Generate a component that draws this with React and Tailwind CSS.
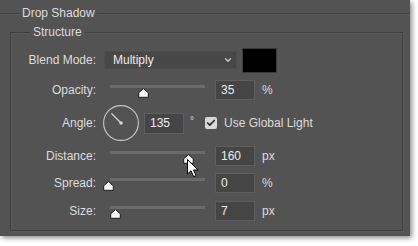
import { Check, ChevronDown } from "lucide-react";

const SLIDERS = {
  opacity: { label: "Opacity:", value: "35", unit: "%", row: "h-[20px]", thumb: "left-[28px]" },
  distance: { label: "Distance:", value: "160", unit: "px", row: "h-[20px]", thumb: "left-[73px]" },
  spread: { label: "Spread:", value: "0", unit: "%", row: "h-[34px]", thumb: "left-[-7px]" },
  size: { label: "Size:", value: "7", unit: "px", row: "h-[22px]", thumb: "left-[0px]" },
};

function Thumb({ className }) {
  return (
    <svg className={`absolute top-[8px] ${className}`} width="11" height="10" viewBox="0 0 11 10">
      <path d="M5.5 0.6 L10.3 4.8 L10.3 9.3 L0.7 9.3 L0.7 4.8 Z" fill="#f6f6f6" stroke="#1c1c1c" strokeWidth="1" strokeLinejoin="round" />
    </svg>
  );
}

function Cursor() {
  return (
    <svg className="absolute left-[77px] top-[13px]" width="13" height="19" viewBox="0 0 13 19">
      <path d="M0.5 0.5 L0.5 15 L4 11.8 L6.6 17.6 L9 16.6 L6.5 11 L11 11 Z" fill="#ffffff" stroke="#000000" strokeWidth="1" strokeLinejoin="round" />
    </svg>
  );
}

function SliderRow({ s, cursor }) {
  return (
    <div className={`flex items-center ${s.row}`}>
      <span className="w-[85px] text-right">{s.label}</span>
      <div className="relative ml-[14px] h-[20px] w-[95px]">
        <div className="mt-[5px] h-[3px] bg-[#6a6a6a]" />
        <Thumb className={s.thumb} />
        {cursor && <Cursor />}
      </div>
      <div className="ml-[10px] flex h-[20px] w-[40px] items-center border border-[#5e5e5e] bg-[#454545] pl-[5px] text-[#ececec]">
        {s.value}
      </div>
      <span className="ml-[7px]">{s.unit}</span>
    </div>
  );
}

export default function App() {
  return (
    <div className="h-[246px] w-[418px] bg-white font-['Liberation_Sans',Arial,sans-serif] text-[12px] text-[#dcdcdc]">
      <div className="h-[236px] w-[410px] bg-[#535353] shadow-[2px_2px_5px_rgba(0,0,0,0.45)]">
        {/* Drop Shadow header */}
        <div className="flex h-[26px] items-center">
          <div className="w-[20px] border-t border-[#414141] shadow-[0_1px_0_#5a5a5a]" />
          <span className="px-[2px] leading-[16px]">Drop Shadow</span>
          <div className="flex-1 border-t border-[#414141] shadow-[0_1px_0_#5a5a5a]" />
        </div>

        {/* Structure box */}
        <div className="ml-[10px] mr-[7px] mt-[6px] h-[199px] border border-[#3e3e3e] shadow-[inset_1px_1px_0_#5a5a5a,1px_1px_0_#5a5a5a]">
          <span className="-mt-[9px] ml-[19px] block w-fit bg-[#535353] px-[3px] leading-[16px]">Structure</span>

          <div className="flex h-[40px] items-center">
            <span className="w-[85px] text-right">Blend Mode:</span>
            <div className="ml-[8px] flex h-[18px] w-[133px] items-center justify-between bg-[#474747] pl-[9px] pr-[4px] text-[#ececec] shadow-[inset_0_0_0_1px_#4e4e4e]">
              <span>Multiply</span>
              <ChevronDown size={10} strokeWidth={3} className="text-[#d0d0d0]" />
            </div>
            <div className="ml-[5px] h-[25px] w-[35px] border border-[#3a3a3a] bg-black" />
          </div>

          <SliderRow s={SLIDERS.opacity} />

          <div className="flex h-[46px] items-center">
            <span className="w-[85px] text-right">Angle:</span>
            <svg className="ml-[7px]" width="36" height="36" viewBox="0 0 36 36">
              <circle cx="18" cy="18" r="17.4" fill="none" stroke="#c8c8c8" strokeWidth="1.1" />
              <line x1="18" y1="18" x2="8.5" y2="8.5" stroke="#d4d4d4" strokeWidth="1.2" />
              <circle cx="18" cy="18" r="1.8" fill="#d4d4d4" />
            </svg>
            <div className="ml-[5px] flex h-[21px] w-[40px] items-center border border-[#5e5e5e] bg-[#454545] pl-[5px] text-[#ececec]">
              135
            </div>
            <span className="mb-[6px] ml-[6px] text-[10px]">°</span>
            <div className="ml-[11px] flex h-[12px] w-[12px] items-center justify-center rounded-[2px] bg-[#d8d8d8]">
              <Check size={10} strokeWidth={4} className="text-[#2a2a2a]" />
            </div>
            <span className="ml-[7px]">Use Global Light</span>
          </div>

          <SliderRow s={SLIDERS.distance} cursor />
          <SliderRow s={SLIDERS.spread} />
          <SliderRow s={SLIDERS.size} />
        </div>
      </div>
    </div>
  );
}
